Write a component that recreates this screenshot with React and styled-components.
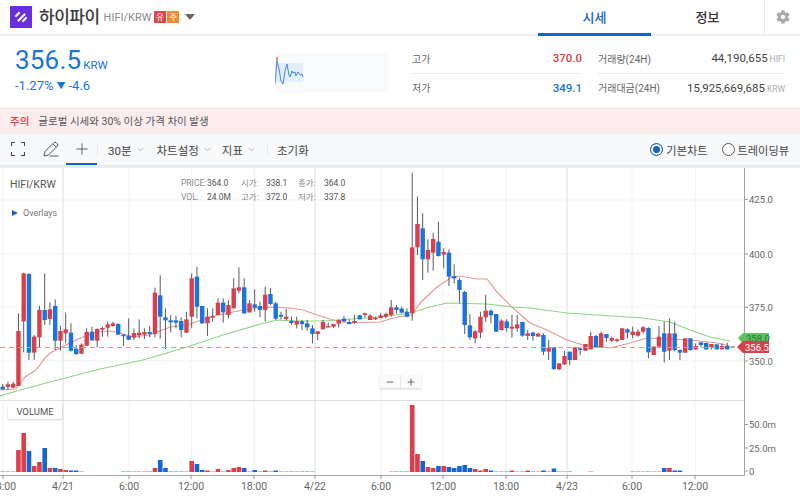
import React from 'react';
import styled, { createGlobalStyle } from 'styled-components';
import { ChevronDown, Plus, Minus } from 'lucide-react';
import { FaCog } from 'react-icons/fa';

const GlobalStyle = createGlobalStyle`
  html, body { margin: 0; padding: 0; background: #fff; }
  body { font-family: Roboto, "Noto Sans CJK KR", sans-serif; }
  * { box-sizing: border-box; }
`;

const BLUE = '#1a73e0';
const RED = '#d9404c';

const Page = styled.div`
  width: 800px;
  height: 497px;
  overflow: hidden;
  display: flex;
  flex-direction: column;
  color: #444;
`;

/* header */
const Header = styled.header`
  height: 36px;
  flex: none;
  display: flex;
  align-items: stretch;
  border-bottom: 2px solid #eeeeee;
`;
const Brand = styled.div`
  flex: 1;
  display: flex;
  align-items: center;
  padding: 0 0 0 10px;
`;
const Logo = styled.svg`
  width: 22px;
  height: 22px;
  margin-right: 7px;
  display: block;
`;
const Title = styled.h1`
  margin: 0 4px 0 0;
  font-size: 17px;
  line-height: 22px;
  font-weight: 500;
  color: #3a3a3a;
  letter-spacing: -0.5px;
`;
const Pair = styled.span`
  font-size: 11px;
  color: #8a8a8a;
  margin-right: 1px;
`;
const Badge = styled.span`
  width: 12px;
  height: 12px;
  margin-left: 1.5px;
  font-size: 8.5px;
  line-height: 12px;
  text-align: center;
  color: #fff;
  background: ${p => p.$color};
`;
const Caret = styled.span`
  width: 0;
  height: 0;
  margin-left: 6px;
  border-left: 5.5px solid transparent;
  border-right: 5.5px solid transparent;
  border-top: 6px solid #666;
`;
const Tab = styled.div`
  width: 113px;
  margin-bottom: -2px;
  font-size: 13px;
  font-weight: 500;
  line-height: 35px;
  text-align: center;
  color: ${p => (p.$active ? '#1565c8' : '#333')};
  border-bottom: 3px solid ${p => (p.$active ? '#1565c8' : 'transparent')};
`;
const GearCell = styled.div`
  width: 36px;
  display: flex;
  align-items: center;
  justify-content: center;
  border-left: 1px solid #e8e8e8;
  color: #aaa;
`;

/* price summary */
const Summary = styled.section`
  height: 71px;
  flex: none;
  display: flex;
  align-items: flex-start;
`;
const PriceBlock = styled.div`
  width: 275px;
  flex: none;
  padding: 8px 0 0 15px;
  color: ${BLUE};
`;
const PriceLine = styled.div`
  display: flex;
  align-items: baseline;
  gap: 2px;
  height: 33px;
  font-size: 26px;
  line-height: 33px;
  letter-spacing: 0.2px;
`;
const Unit = styled.span`
  font-size: 11.5px;
  letter-spacing: 0;
`;
const ChangeLine = styled.div`
  font-size: 13px;
  line-height: 17px;
`;
const DownMark = styled.span`
  font-size: 9px;
  margin: 0 3px;
  vertical-align: 1px;
`;
const SparkBox = styled.div`
  width: 113px;
  height: 40px;
  margin: 17px 24px 0 0;
  flex: none;
  background: #f8fafc;
`;
const Spark = styled.svg`
  display: block;
`;
const StatColumn = styled.div`
  width: ${p => p.$width}px;
  margin: 7px ${p => p.$gap}px 0 0;
  flex: none;
`;
const StatRow = styled.div`
  display: flex;
  justify-content: space-between;
  align-items: center;
  height: 30px;
  font-size: 10px;
  color: #666;
  & + & {
    height: 28px;
    border-top: 1px solid #eeeeee;
  }
`;
const StatValue = styled.span`
  font-size: 11.5px;
  font-weight: ${p => (p.$color ? 500 : 400)};
  color: ${p => p.$color || '#444'};
`;
const StatUnit = styled.span`
  font-size: 8.5px;
  color: #aaa;
  margin-left: 2px;
`;

/* alert */
const Alert = styled.div`
  height: 27px;
  flex: none;
  display: flex;
  align-items: center;
  padding-left: 10px;
  gap: 9px;
  font-size: 10.5px;
  color: #555;
  background: #fbeded;
  border-bottom: 1px solid #ececec;
`;
const AlertTag = styled.span`
  color: ${RED};
  font-weight: 500;
`;

/* toolbar */
const Toolbar = styled.div`
  height: 31px;
  flex: none;
  display: flex;
  align-items: center;
  background: #f7f9fb;
  font-size: 11.5px;
  color: #444;
`;
const ToolIcon = styled.div`
  width: ${p => p.$width}px;
  height: 31px;
  flex: none;
  display: flex;
  align-items: center;
  justify-content: center;
  color: #444;
  border-bottom: 2px solid ${p => (p.$active ? '#1565c8' : 'transparent')};
`;
const Sep = styled.div`
  width: 1px;
  height: 13px;
  margin: ${p => p.$margin};
  background: #e6e8ea;
`;
const Menu = styled.div`
  display: flex;
  align-items: center;
  gap: 3px;
  margin-right: ${p => p.$right}px;
  white-space: nowrap;
  color: #444;
  svg { color: #777; }
`;
const RadioGroup = styled.div`
  margin-left: auto;
  display: flex;
  align-items: center;
  gap: 14px;
  padding-right: 11px;
  font-size: 11.2px;
`;
const RadioItem = styled.label`
  display: flex;
  align-items: center;
  gap: 3px;
  white-space: nowrap;
`;
const RadioDot = styled.span`
  width: 13px;
  height: 13px;
  border-radius: 50%;
  border: 1px solid ${p => (p.$on ? '#1565c8' : '#555')};
  background: ${p => (p.$on ? '#1565c8' : '#fff')};
  box-shadow: ${p => (p.$on ? 'inset 0 0 0 2px #fff' : 'none')};
`;

/* chart */
const ChartArea = styled.div`
  position: relative;
  flex: 1;
  border-top: 3px solid #e9ecef;
  overflow: hidden;
`;
const ChartSvg = styled.svg`
  display: block;
  font-family: Roboto, sans-serif;
`;
const Symbol = styled.div`
  position: absolute;
  left: 10px;
  top: 10px;
  font-size: 10.5px;
  color: #555;
`;
const Overlays = styled.div`
  position: absolute;
  left: 12px;
  top: 40px;
  display: flex;
  align-items: center;
  gap: 5px;
  font-size: 9px;
  color: #777;
  &::before {
    content: '';
    border-left: 6px solid #1f5fc8;
    border-top: 3.5px solid transparent;
    border-bottom: 3.5px solid transparent;
  }
`;
const Legend = styled.div`
  position: absolute;
  left: 181px;
  top: 10px;
  display: grid;
  grid-template-columns: 26px 34px 25px 32px 26px auto;
  row-gap: 3px;
  font-size: 8.5px;
  line-height: 11px;
  color: #555;
`;
const LegendKey = styled.span`
  color: #888;
`;
const VolumeTag = styled.div`
  position: absolute;
  left: 8px;
  top: 236px;
  width: 54px;
  height: 15px;
  font-size: 9.5px;
  line-height: 15px;
  text-align: center;
  color: #555;
  background: #fff;
  box-shadow: 0 1px 2px rgba(0, 0, 0, 0.18);
`;
const ZoomBox = styled.div`
  position: absolute;
  left: 380px;
  top: 207px;
  width: 41px;
  height: 13px;
  display: flex;
  background: #fbfbfb;
  box-shadow: 0 1px 2px rgba(0, 0, 0, 0.16);
  color: #666;
`;
const ZoomButton = styled.div`
  flex: 1;
  display: flex;
  align-items: center;
  justify-content: center;
  & + & { border-left: 1px solid #e4e4e4; }
`;

// traced off the screenshot at 3x: [color, wickTop, wickBottom, bodyTop, bodyBottom]
const block = (y0, rows) =>
  rows.map(([c, wt, wb, bt, bb]) => [c, y0 + wt / 3, y0 + wb / 3, y0 + bt / 3, y0 + bb / 3]);

const candles = [
  ...block(260, [
    ['b', 372, 390, 380, 388], ['r', 365, 390, 373, 381], ['r', 365, 385, 371, 383], ['r', 160, 378, 213, 378],
    ['r', 38, 277, 40, 184], ['b', 40, 300, 42, 278], ['r', 225, 300, 230, 278], ['r', 137, 263, 150, 232],
    ['b', 40, 195, 150, 180], ['r', 127, 195, 148, 177], ['b', 118, 270, 138, 242], ['r', 197, 272, 213, 242],
    ['r', 158, 250, 208, 220], ['b', 190, 275, 218, 272], ['b', 255, 285, 266, 282], ['r', 250, 283, 254, 281],
    ['r', 205, 258, 216, 257], ['b', 200, 242, 215, 241], ['r', 205, 262, 207, 242], ['r', 200, 230, 204, 209],
    ['r', 185, 230, 193, 203], ['r', 185, 200, 190, 198], ['b', 190, 225, 192, 224], ['b', 222, 258, 224, 227],
    ['b', 175, 240, 227, 239], ['r', 205, 240, 219, 233], ['r', 178, 235, 218, 226], ['r', 205, 237, 216, 224],
    ['b', 198, 232, 216, 222], ['r', 83, 232, 98, 222], ['b', 46, 236, 106, 170], ['b', 145, 268, 172, 181],
    ['b', 165, 217, 181, 187], ['b', 168, 205, 181, 188], ['b', 172, 232, 183, 210], ['r', 155, 218, 178, 218],
    ['r', 40, 205, 55, 170], ['b', 20, 175, 50, 140], ['b', 138, 192, 138, 190], ['r', 145, 228, 170, 190],
    ['r', 145, 185, 168, 173], ['r', 115, 165, 128, 165], ['b', 115, 188, 128, 157], ['r', 120, 175, 135, 165],
    ['r', 55, 145, 85, 145], ['r', 22, 100, 82, 92], ['b', 55, 162, 82, 160], ['r', 120, 158, 130, 157],
    ['b', 88, 155, 133, 143], ['b', 125, 172, 138, 150], ['r', 80, 185, 104, 150], ['b', 85, 135, 102, 132],
    ['b', 125, 180, 130, 176], ['b', 155, 178, 165, 170], ['r', 146, 182, 170, 177], ['b', 170, 195, 182, 189],
    ['r', 170, 205, 183, 194], ['b', 180, 210, 184, 192], ['b', 180, 212, 190, 202], ['b', 195, 250, 205, 222],
    ['r', 213, 240, 214, 222], ['r', 180, 208, 186, 208], ['r', 188, 200, 198, 200], ['r', 192, 204, 192, 200],
    ['r', 178, 203, 180, 191], ['b', 168, 186, 176, 184], ['b', 178, 193, 186, 192], ['r', 165, 191, 183, 189],
    ['b', 165, 178, 166, 178], ['r', 158, 172, 160, 165], ['r', 162, 180, 167, 180], ['r', 170, 180, 173, 178],
  ]),
  ...block(170, [
    ['r', 430, 445, 436, 444], ['r', 428, 445, 432, 440], ['r', 390, 440, 412, 435], ['b', 405, 430, 412, 420],
    ['b', 410, 430, 416, 428], ['b', 415, 442, 425, 440], ['r', 8, 452, 232, 430], ['r', 80, 255, 162, 232],
    ['b', 130, 330, 175, 268], ['r', 208, 308, 240, 268], ['r', 188, 302, 207, 248], ['b', 155, 260, 215, 258],
    ['r', 235, 295, 246, 254], ['b', 238, 348, 248, 320], ['b', 283, 340, 318, 325], ['b', 323, 400, 330, 360],
    ['b', 362, 492, 366, 465], ['b', 432, 510, 466, 502], ['r', 480, 520, 484, 505], ['r', 425, 505, 440, 488],
    ['r', 375, 455, 422, 442], ['b', 418, 460, 422, 436], ['b', 432, 485, 432, 485], ['r', 448, 482, 452, 480],
    ['b', 448, 485, 454, 474], ['r', 435, 503, 470, 476], ['r', 435, 485, 463, 475], ['b', 455, 500, 456, 497],
    ['r', 480, 510, 490, 498], ['b', 485, 512, 488, 498], ['r', 488, 498, 491, 500], ['b', 490, 555, 495, 545],
    ['r', 510, 570, 533, 545], ['b', 530, 600, 532, 597], ['r', 580, 600, 580, 598], ['r', 543, 585, 558, 583],
    ['b', 545, 585, 545, 570],
  ]),
  ...block(310, [
    ['r', 112, 150, 112, 150], ['b', 115, 135, 115, 120], ['r', 102, 122, 102, 122], ['r', 65, 118, 78, 118],
    ['b', 75, 112, 78, 112], ['r', 65, 112, 70, 112], ['b', 72, 95, 72, 84], ['r', 80, 97, 84, 92],
    ['r', 85, 97, 88, 93], ['r', 55, 90, 55, 90], ['b', 55, 85, 58, 68], ['r', 50, 85, 65, 75],
    ['r', 58, 80, 65, 77], ['r', 48, 70, 52, 65], ['b', 52, 145, 54, 127], ['r', 108, 135, 110, 135],
    ['r', 48, 110, 80, 110], ['b', 35, 158, 70, 125], ['r', 25, 150, 70, 122], ['b', 35, 125, 70, 120],
    ['b', 118, 150, 120, 128], ['r', 85, 128, 85, 128], ['b', 85, 122, 85, 120], ['r', 100, 120, 108, 118],
    ['b', 97, 112, 97, 105], ['b', 97, 120, 99, 118], ['r', 102, 118, 102, 112], ['b', 103, 118, 103, 118],
    ['r', 100, 118, 108, 118], ['b', 98, 118, 108, 118],
  ]),
];

const candleX = i => 2.7 + i * 5.25;

// top of the volume bar by candle index; all others are a 1px dash on the baseline
const volumes = {
  3: 450, 4: 433, 5: 451, 6: 466, 7: 462, 8: 448, 9: 468, 10: 468, 11: 469, 12: 470, 13: 470.5, 14: 470.5,
  29: 468, 30: 460, 31: 468, 36: 461, 37: 464, 38: 470, 39: 470.5, 41: 469, 43: 470, 44: 468, 45: 467, 46: 468,
  48: 470, 50: 470.5, 52: 470.5,
  78: 405, 79: 454, 80: 461, 81: 467, 82: 468, 83: 466, 84: 466, 85: 467, 86: 468, 87: 466, 88: 465, 89: 468,
  90: 469, 91: 470.5, 92: 469, 93: 470.5, 97: 470.5, 100: 470.5, 103: 470.5, 105: 468.5,
  126: 468, 127: 468, 128: 470.5, 129: 470.5,
};
const noDash = i => (i > 15 && i < 23) || (i > 59 && i < 74) || (i > 108 && i < 112) || (i > 112 && i < 120) || i > 129;

const shortMA = '0,390 16,389 25,377 36,370 45,358 50,353 62,347 72,342 83,337 97,332 110,331 120,333 133,337 150,335 170,327 187,325 210,317 233,312 253,308 270,307 290,308 303,310 317,315 333,320 350,323 380,322 397,317 412,315 420,303 437,287 452,277 460,276 477,279 487,279 497,292 513,308 530,323 547,330 567,340 583,345 610,348 630,343 647,338 667,339 690,340 717,343 730,346';
const longMA = '0,396 20,390 50,382 100,369 143,360 187,347 223,335 257,325 277,320 290,321 323,321 380,317 410,313 430,307 447,303 487,304 513,307 530,308 567,313 643,318 670,322 690,330 710,337 730,341';

const priceGrid = [200, 254, 307, 361];
const timeTicks = [
  [3, '18:00'], [63, '4/21', true], [129, '6:00'], [191, '12:00'], [254, '18:00'], [315, '4/22', true],
  [381, '6:00'], [443, '12:00'], [506, '18:00'], [567, '4/23', true], [632, '6:00'], [695, '12:00'],
];
const axisLabels = [
  [199.5, '425.0'], [254, '400.0'], [307.5, '375.0'], [361, '350.0'],
  [424.5, '50.0m'], [448, '25.0m'], [471, '0'],
];

const Chart = () => (
  <ChartSvg width="800" height="329" viewBox="0 168 800 329">
    {priceGrid.map(y => <line key={y} x1="0" x2="745" y1={y} y2={y} stroke="#f1f1f1" />)}
    {timeTicks.map(([x, , day]) => (
      <line key={x} x1={x} x2={x} y1="168" y2="475" stroke={day ? '#dcdcdc' : '#f0f0f0'} />
    ))}
    <polyline points={shortMA} fill="none" stroke="#e39a94" strokeWidth="1.2" />
    <polyline points={longMA} fill="none" stroke="#8fd38a" strokeWidth="1.2" />
    {candles.map(([c, wt, wb, bt, bb], i) => {
      const x = candleX(i);
      return (
        <g key={i}>
          <line x1={x} x2={x} y1={wt} y2={wb} stroke="#555a62" strokeWidth="1" />
          <rect x={x - 2.2} y={bt} width="4.4" height={Math.max(bb - bt, 1.5)} fill={c === 'r' ? RED : BLUE} />
        </g>
      );
    })}
    <line x1="731" x2="735" y1="347" y2="347" stroke="#555a62" />
    <line x1="0" x2="745" y1="347.5" y2="347.5" stroke="#f08a92" strokeDasharray="5 4" />
    <line x1="0" x2="745" y1="400.5" y2="400.5" stroke="#dddddd" />
    {candles.map(([c], i) => {
      const x = candleX(i);
      const top = volumes[i];
      if (!top && noDash(i)) return null;
      const y = top || 471;
      return (
        <rect
          key={i}
          x={x - 2.3}
          y={y}
          width="4.6"
          height={472 - y}
          fill={c === 'r' ? RED : '#1565d8'}
          opacity={top ? 1 : 0.4}
        />
      );
    })}
    <line x1="0" x2="745" y1="475.5" y2="475.5" stroke="#aaaaaa" />
    <line x1="744.5" x2="744.5" y1="168" y2="475" stroke="#a0a0a0" />
    {timeTicks.map(([x, label]) => (
      <g key={label + x}>
        <line x1={x} x2={x} y1="475" y2="479" stroke="#999" />
        <text x={x} y="490" fontSize="10.5" fill="#666" textAnchor="middle">{label}</text>
      </g>
    ))}
    {axisLabels.map(([y, label]) => (
      <g key={label}>
        <line x1="745" x2="748" y1={y} y2={y} stroke="#999" />
        <text x="749" y={y + 3.5} fontSize="9.5" fill="#666">{label}</text>
      </g>
    ))}
    <path d="M738 338 L743 333 H769 V344 H743 Z" fill="#5ec462" />
    <text x="746" y="342" fontSize="9.5" fill="#2f6b33">358.0</text>
    <path d="M737 347 L743 341 H769 V353 H743 Z" fill={RED} />
    <text x="745" y="350.5" fontSize="9.5" fill="#fff">356.5</text>
  </ChartSvg>
);

const App = () => (
  <Page>
    <GlobalStyle />
    <Header>
      <Brand>
        <Logo viewBox="0 0 22 22">
          <rect width="22" height="22" fill="#6a2ee0" />
          <path d="M6 10 L9 7 M8.5 14.5 L14.5 8.5 M13 15 L16 12" stroke="#fff" strokeWidth="2.2" strokeLinecap="round" />
        </Logo>
        <Title>하이파이</Title>
        <Pair>HIFI/KRW</Pair>
        <Badge $color="#e0464c">유</Badge>
        <Badge $color="#ef8a2c">주</Badge>
        <Caret />
      </Brand>
      <Tab $active>시세</Tab>
      <Tab>정보</Tab>
      <GearCell><FaCog size={14} /></GearCell>
    </Header>

    <Summary>
      <PriceBlock>
        <PriceLine>356.5<Unit>KRW</Unit></PriceLine>
        <ChangeLine>-1.27%<DownMark>▼</DownMark>-4.6</ChangeLine>
      </PriceBlock>
      <SparkBox>
        <Spark width="113" height="40" viewBox="0 0 113 40">
          <rect x="0" y="10" width="28" height="19" fill="#e3eefb" />
          <path d="M2 4 V8" stroke={RED} strokeWidth="1.2" />
          <polyline
            points="0,31 2,8 4,16 6,28 8,31 10,18 12,11 14,22 15,24 17,18 18,20 20,19 21,23 23,19 25,22 27,21 28,24"
            fill="none"
            stroke="#3a7bd5"
            strokeWidth="0.9"
          />
        </Spark>
      </SparkBox>
      <StatColumn $width={170} $gap={16}>
        <StatRow>고가<StatValue $color={RED}>370.0</StatValue></StatRow>
        <StatRow>저가<StatValue $color={BLUE}>349.1</StatValue></StatRow>
      </StatColumn>
      <StatColumn $width={187} $gap={0}>
        <StatRow>거래량(24H)<span><StatValue>44,190,655</StatValue><StatUnit>HIFI</StatUnit></span></StatRow>
        <StatRow>거래대금(24H)<span><StatValue>15,925,669,685</StatValue><StatUnit>KRW</StatUnit></span></StatRow>
      </StatColumn>
    </Summary>

    <Alert>
      <AlertTag>주의</AlertTag>
      글로벌 시세와 30% 이상 가격 차이 발생
    </Alert>

    <Toolbar>
      <ToolIcon $width={35}>
        <svg width="14" height="14" viewBox="0 0 14 14" fill="none" stroke="#444" strokeWidth="1.1">
          <path d="M0.5 4 V0.5 H4 M10 0.5 H13.5 V4 M13.5 10 V13.5 H10 M4 13.5 H0.5 V10" />
        </svg>
      </ToolIcon>
      <ToolIcon $width={31}>
        <svg width="16" height="16" viewBox="0 0 16 16" fill="none" stroke="#555" strokeWidth="1">
          <path d="M1 15 L2 10.5 L11 1.5 Q12 0.8 13 1.5 L14.5 3 Q15.2 4 14.5 5 L5.5 14 Z M9.8 2.8 L13.2 6.2 M7 15 H15.5" />
        </svg>
      </ToolIcon>
      <ToolIcon $width={31} $active><Plus size={18} strokeWidth={1.1} /></ToolIcon>
      <Sep $margin="0 10px 0 0" />
      <Menu $right={11}>30분<ChevronDown size={11} strokeWidth={1.2} /></Menu>
      <Menu $right={9}>차트설정<ChevronDown size={11} strokeWidth={1.2} /></Menu>
      <Menu $right={10}>지표<ChevronDown size={11} strokeWidth={1.2} /></Menu>
      <Sep $margin="0 9px 0 0" />
      <Menu $right={0}>초기화</Menu>
      <RadioGroup>
        <RadioItem><RadioDot $on />기본차트</RadioItem>
        <RadioItem><RadioDot />트레이딩뷰</RadioItem>
      </RadioGroup>
    </Toolbar>

    <ChartArea>
      <Chart />
      <Symbol>HIFI/KRW</Symbol>
      <Legend>
        <LegendKey>PRICE:</LegendKey><span>364.0</span>
        <LegendKey>시가:</LegendKey><span>338.1</span>
        <LegendKey>종가:</LegendKey><span>364.0</span>
        <LegendKey>VOL:</LegendKey><span>24.0M</span>
        <LegendKey>고가:</LegendKey><span>372.0</span>
        <LegendKey>저가:</LegendKey><span>337.8</span>
      </Legend>
      <Overlays>Overlays</Overlays>
      <VolumeTag>VOLUME</VolumeTag>
      <ZoomBox>
        <ZoomButton><Minus size={10} strokeWidth={2.5} /></ZoomButton>
        <ZoomButton><Plus size={10} strokeWidth={2.5} /></ZoomButton>
      </ZoomBox>
    </ChartArea>
  </Page>
);

export default App;
